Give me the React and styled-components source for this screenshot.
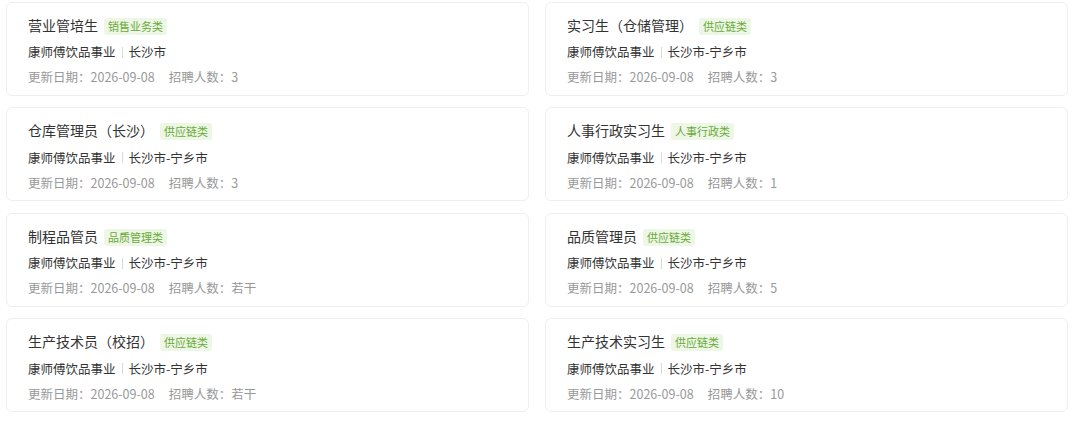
import React from "react";
import styled, { createGlobalStyle } from "styled-components";

const GlobalStyle = createGlobalStyle`
  html, body {
    margin: 0;
    padding: 0;
    background: #ffffff;
  }
  body {
    font-family: "Noto Sans CJK SC", "Noto Sans", sans-serif;
    -webkit-font-smoothing: antialiased;
  }
`;

const List = styled.div`
  display: grid;
  grid-template-columns: 523px 523px;
  column-gap: 16px;
  row-gap: 11.5px;
  padding: 1.5px 12px 0 6px;
`;

const Card = styled.div`
  box-sizing: border-box;
  height: 94px;
  padding: 12px 21px 0;
  background: #fff;
  border: 1px solid #efefef;
  border-radius: 6px;
`;

const TitleRow = styled.div`
  display: flex;
  align-items: center;
  height: 21px;
`;

const Title = styled.span`
  font-size: 14px;
  line-height: 21px;
  color: #333;
  white-space: nowrap;
`;

const Tag = styled.span`
  margin-left: 6px;
  margin-top: 2px;
  padding: 0 4px;
  height: 17px;
  line-height: 17px;
  font-size: 11px;
  color: #67ab38;
  background: #eef6e6;
  border-radius: 3px;
  white-space: nowrap;
`;

const Company = styled.div`
  display: flex;
  align-items: center;
  margin-top: 6.5px;
  height: 20px;
  font-size: 12.5px;
  line-height: 20px;
  color: #333;
`;

const Divider = styled.span`
  display: inline-block;
  width: 1px;
  height: 11px;
  margin: 0 6px;
  background: #d9d9d9;
`;

const Meta = styled.div`
  display: flex;
  margin-top: 5px;
  height: 20px;
  font-size: 12.5px;
  line-height: 20px;
  color: #999;
`;

const MetaItem = styled.span`
  & + & {
    margin-left: 14px;
  }
`;

const jobs = [
  { title: "营业管培生", tag: "销售业务类", city: "长沙市", count: "3" },
  { title: "实习生（仓储管理）", tag: "供应链类", city: "长沙市-宁乡市", count: "3" },
  { title: "仓库管理员（长沙）", tag: "供应链类", city: "长沙市-宁乡市", count: "3" },
  { title: "人事行政实习生", tag: "人事行政类", city: "长沙市-宁乡市", count: "1" },
  { title: "制程品管员", tag: "品质管理类", city: "长沙市-宁乡市", count: "若干" },
  { title: "品质管理员", tag: "供应链类", city: "长沙市-宁乡市", count: "5" },
  { title: "生产技术员（校招）", tag: "供应链类", city: "长沙市-宁乡市", count: "若干" },
  { title: "生产技术实习生", tag: "供应链类", city: "长沙市-宁乡市", count: "10" },
];

export default function App() {
  return (
    <>
      <GlobalStyle />
      <List>
        {jobs.map((job, i) => (
          <Card key={i}>
            <TitleRow>
              <Title>{job.title}</Title>
              <Tag>{job.tag}</Tag>
            </TitleRow>
            <Company>
              康师傅饮品事业
              <Divider />
              {job.city}
            </Company>
            <Meta>
              <MetaItem>更新日期：2026-09-08</MetaItem>
              <MetaItem>招聘人数：{job.count}</MetaItem>
            </Meta>
          </Card>
        ))}
      </List>
    </>
  );
}
